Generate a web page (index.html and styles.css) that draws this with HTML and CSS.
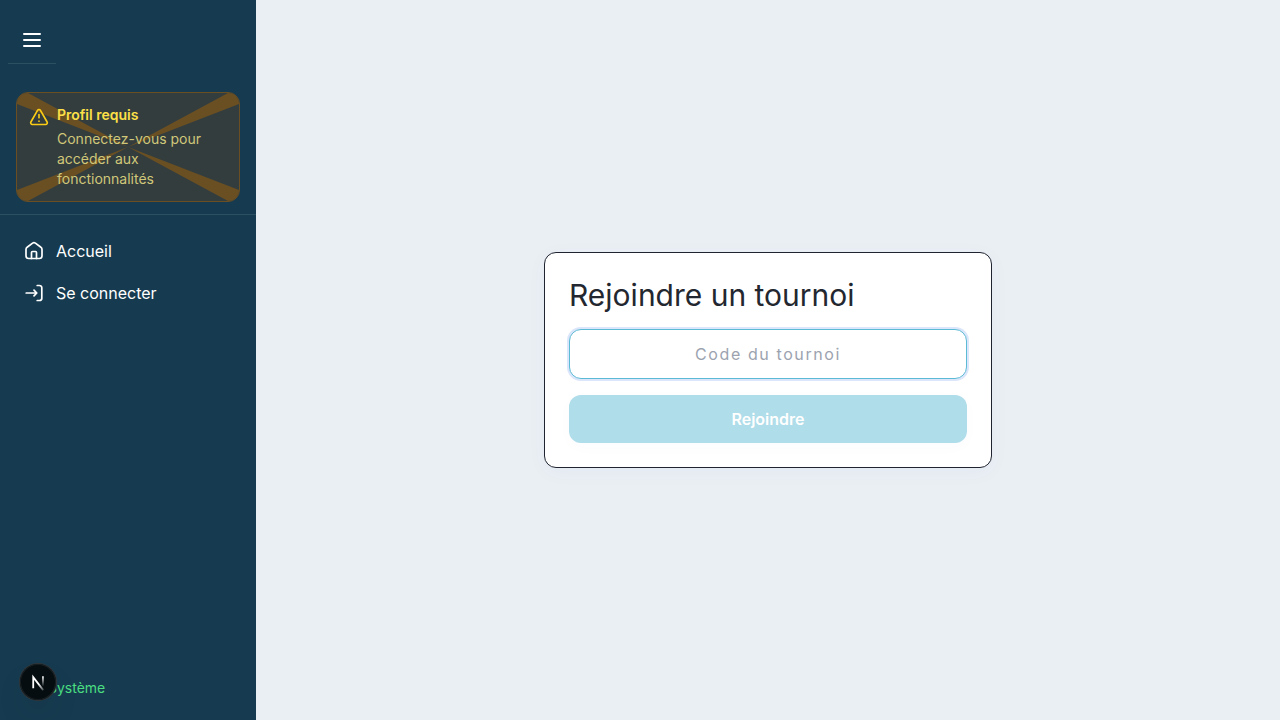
FILE: index.html
```html
<!DOCTYPE html>
<html lang="fr">
<head>
<meta charset="utf-8">
<meta name="viewport" content="width=device-width, initial-scale=1">
<title>Rejoindre un tournoi</title>
<link rel="stylesheet" href="styles.css">
</head>
<body>
<div class="layout">
  <aside class="sidebar">
    <div class="sidebar-top">
      <button class="menu-button" type="button" aria-label="Menu">
        <svg class="icon-lg" viewBox="0 0 24 24"><path d="M4 6h16M4 12h16M4 18h16"/></svg>
      </button>
    </div>
    <div class="notice-wrap">
      <div class="notice">
        <svg class="notice-rays" viewBox="0 0 222 108" preserveAspectRatio="none" aria-hidden="true">
          <path d="M0 11 0 0 11 0 111 54ZM211 0 222 0 222 11 111 54ZM222 97 222 108 211 108 111 54ZM11 108 0 108 0 97 111 54Z"/>
        </svg>
        <svg class="icon notice-icon" viewBox="0 0 24 24"><path d="m21.73 18-8-14a2 2 0 0 0-3.48 0l-8 14A2 2 0 0 0 4 21h16a2 2 0 0 0 1.73-3M12 9v4M12 17h.01"/></svg>
        <div class="notice-body">
          <p class="notice-title">Profil requis</p>
          <p class="notice-text">Connectez-vous pour accéder aux fonctionnalités</p>
        </div>
      </div>
    </div>
    <nav class="nav">
      <a class="nav-link" href="#">
        <svg class="icon" viewBox="0 0 20 20"><path d="M2 8.4a2.6 2.6 0 0 1 1.1-2.1L8.6 2.1a2.3 2.3 0 0 1 2.8 0l5.5 4.2A2.6 2.6 0 0 1 18 8.4v6.4a2.7 2.7 0 0 1-2.7 2.7H4.7A2.7 2.7 0 0 1 2 14.8z"/><path d="M7.5 17.5v-6a1 1 0 0 1 1-1h3a1 1 0 0 1 1 1v6"/></svg>
        <span>Accueil</span>
      </a>
      <a class="nav-link" href="#">
        <svg class="icon" viewBox="0 0 20 20"><path d="M13.2 2.5h2.3A2.3 2.3 0 0 1 17.8 4.8v10.4a2.3 2.3 0 0 1-2.3 2.3h-2.3M2.2 10h9.8M10 7.2l2.8 2.8-2.8 2.8"/></svg>
        <span>Se connecter</span>
      </a>
    </nav>
    <div class="sidebar-footer">Système</div>
  </aside>
  <main class="main">
    <form class="card">
      <h1 class="card-title">Rejoindre un tournoi</h1>
      <input class="code-input" type="text" placeholder="Code du tournoi" aria-label="Code du tournoi">
      <button class="submit" type="submit" disabled>Rejoindre</button>
    </form>
  </main>
</div>
<button class="dev-badge" type="button" aria-label="Next.js">
  <svg class="dev-logo" viewBox="0 0 40 40">
    <defs>
      <linearGradient id="fade-diagonal" gradientUnits="userSpaceOnUse" x1="21" y1="22" x2="28" y2="31"><stop stop-color="#fff"/><stop offset="1" stop-color="#fff" stop-opacity="0"/></linearGradient>
      <linearGradient id="fade-stem" gradientUnits="userSpaceOnUse" x1="26" y1="13" x2="26" y2="25"><stop stop-color="#fff"/><stop offset="1" stop-color="#fff" stop-opacity="0"/></linearGradient>
    </defs>
    <path d="M14.7 27V14.6L25.8 29" fill="none" stroke="url(#fade-diagonal)" stroke-width="2"/>
    <path d="M25.5 13.5V25" fill="none" stroke="url(#fade-stem)" stroke-width="2"/>
  </svg>
</button>
</body>
</html>
```

FILE: styles.css
```css
* { box-sizing: border-box; margin: 0; padding: 0; }

body {
  font-family: Inter, "Liberation Sans", sans-serif;
  font-size: 16px;
  line-height: 24px;
  background: #eaeff3;
  color: #1f2937;
}

button, input { font: inherit; }

.layout { display: flex; min-height: 100vh; }

.sidebar {
  display: flex;
  flex-direction: column;
  flex: 0 0 256px;
  background: #163b50;
  color: #fff;
}

.sidebar-top {
  align-self: flex-start;
  margin: 16px 8px 0;
  border-bottom: 1px solid #2d4f62;
}

.menu-button {
  display: flex;
  padding: 12px 12px 11px;
  border: 0;
  background: none;
  color: #fff;
}

.icon, .icon-lg {
  flex: none;
  width: 20px;
  height: 20px;
  fill: none;
  stroke: currentColor;
  stroke-width: 2;
  stroke-linecap: round;
  stroke-linejoin: round;
}

.icon-lg { width: 24px; height: 24px; }

.notice-wrap {
  padding: 28px 16px 12px;
  border-bottom: 1px solid #2d4f62;
}

.notice {
  position: relative;
  display: flex;
  gap: 8px;
  padding: 12px;
  border: 1px solid #6a4f23;
  border-radius: 12px;
  background: #333d3e;
  overflow: hidden;
}

.notice-rays {
  position: absolute;
  inset: 0;
  width: 100%;
  height: 100%;
  fill: #6a4f23;
}

.notice-icon { position: relative; margin-top: 2px; color: #facc15; }
.notice-body { position: relative; font-size: 14px; line-height: 20px; }
.notice-title { margin-bottom: 4px; font-weight: 600; color: #fde047; }
.notice-text { color: #d0c779; }

.nav { display: grid; gap: 2px; padding: 16px; }

.nav-link {
  display: flex;
  align-items: center;
  gap: 12px;
  padding: 8px;
  color: #fff;
  text-decoration: none;
}

.nav-link .icon { stroke-width: 1.7; }

.sidebar-footer {
  margin-top: auto;
  padding: 22px 48px;
  font-size: 14px;
  line-height: 20px;
  color: #4ade80;
}

.main {
  display: flex;
  flex: 1;
  align-items: center;
  justify-content: center;
  padding: 16px;
}

.card {
  display: grid;
  gap: 16px;
  width: 100%;
  max-width: 448px;
  padding: 24px;
  border: 1px solid #1f2430;
  border-radius: 12px;
  background: #fff;
  box-shadow: 0 4px 20px rgb(60 110 230 / 4%);
}

.card-title { font-size: 30px; line-height: 36px; font-weight: 400; color: #23272f; }

.code-input {
  width: 100%;
  height: 50px;
  padding: 12px 16px;
  border: 1px solid #5bbad5;
  border-radius: 12px;
  outline: none;
  background: #fff;
  box-shadow: 0 0 0 2px #dbe6fb;
  color: #1f2430;
  text-align: center;
  letter-spacing: 0.1em;
}

.code-input::placeholder { color: #9ca3af; }

.submit {
  padding: 12px 16px;
  border: 0;
  border-radius: 12px;
  background: #afdde9;
  box-shadow: 0 4px 16px rgb(60 110 230 / 2%);
  color: #fff;
  font-weight: 600;
}

.dev-badge {
  position: fixed;
  left: 20px;
  bottom: 20px;
  width: 36px;
  height: 36px;
  border: 0;
  border-radius: 50%;
  background: #050d10;
  box-shadow: 0 0 0 1px #303436, inset 0 0 0 1px #182024, 0 16px 32px -8px rgb(0 0 0 / 24%);
}

.dev-logo { display: block; width: 100%; height: 100%; }
```
